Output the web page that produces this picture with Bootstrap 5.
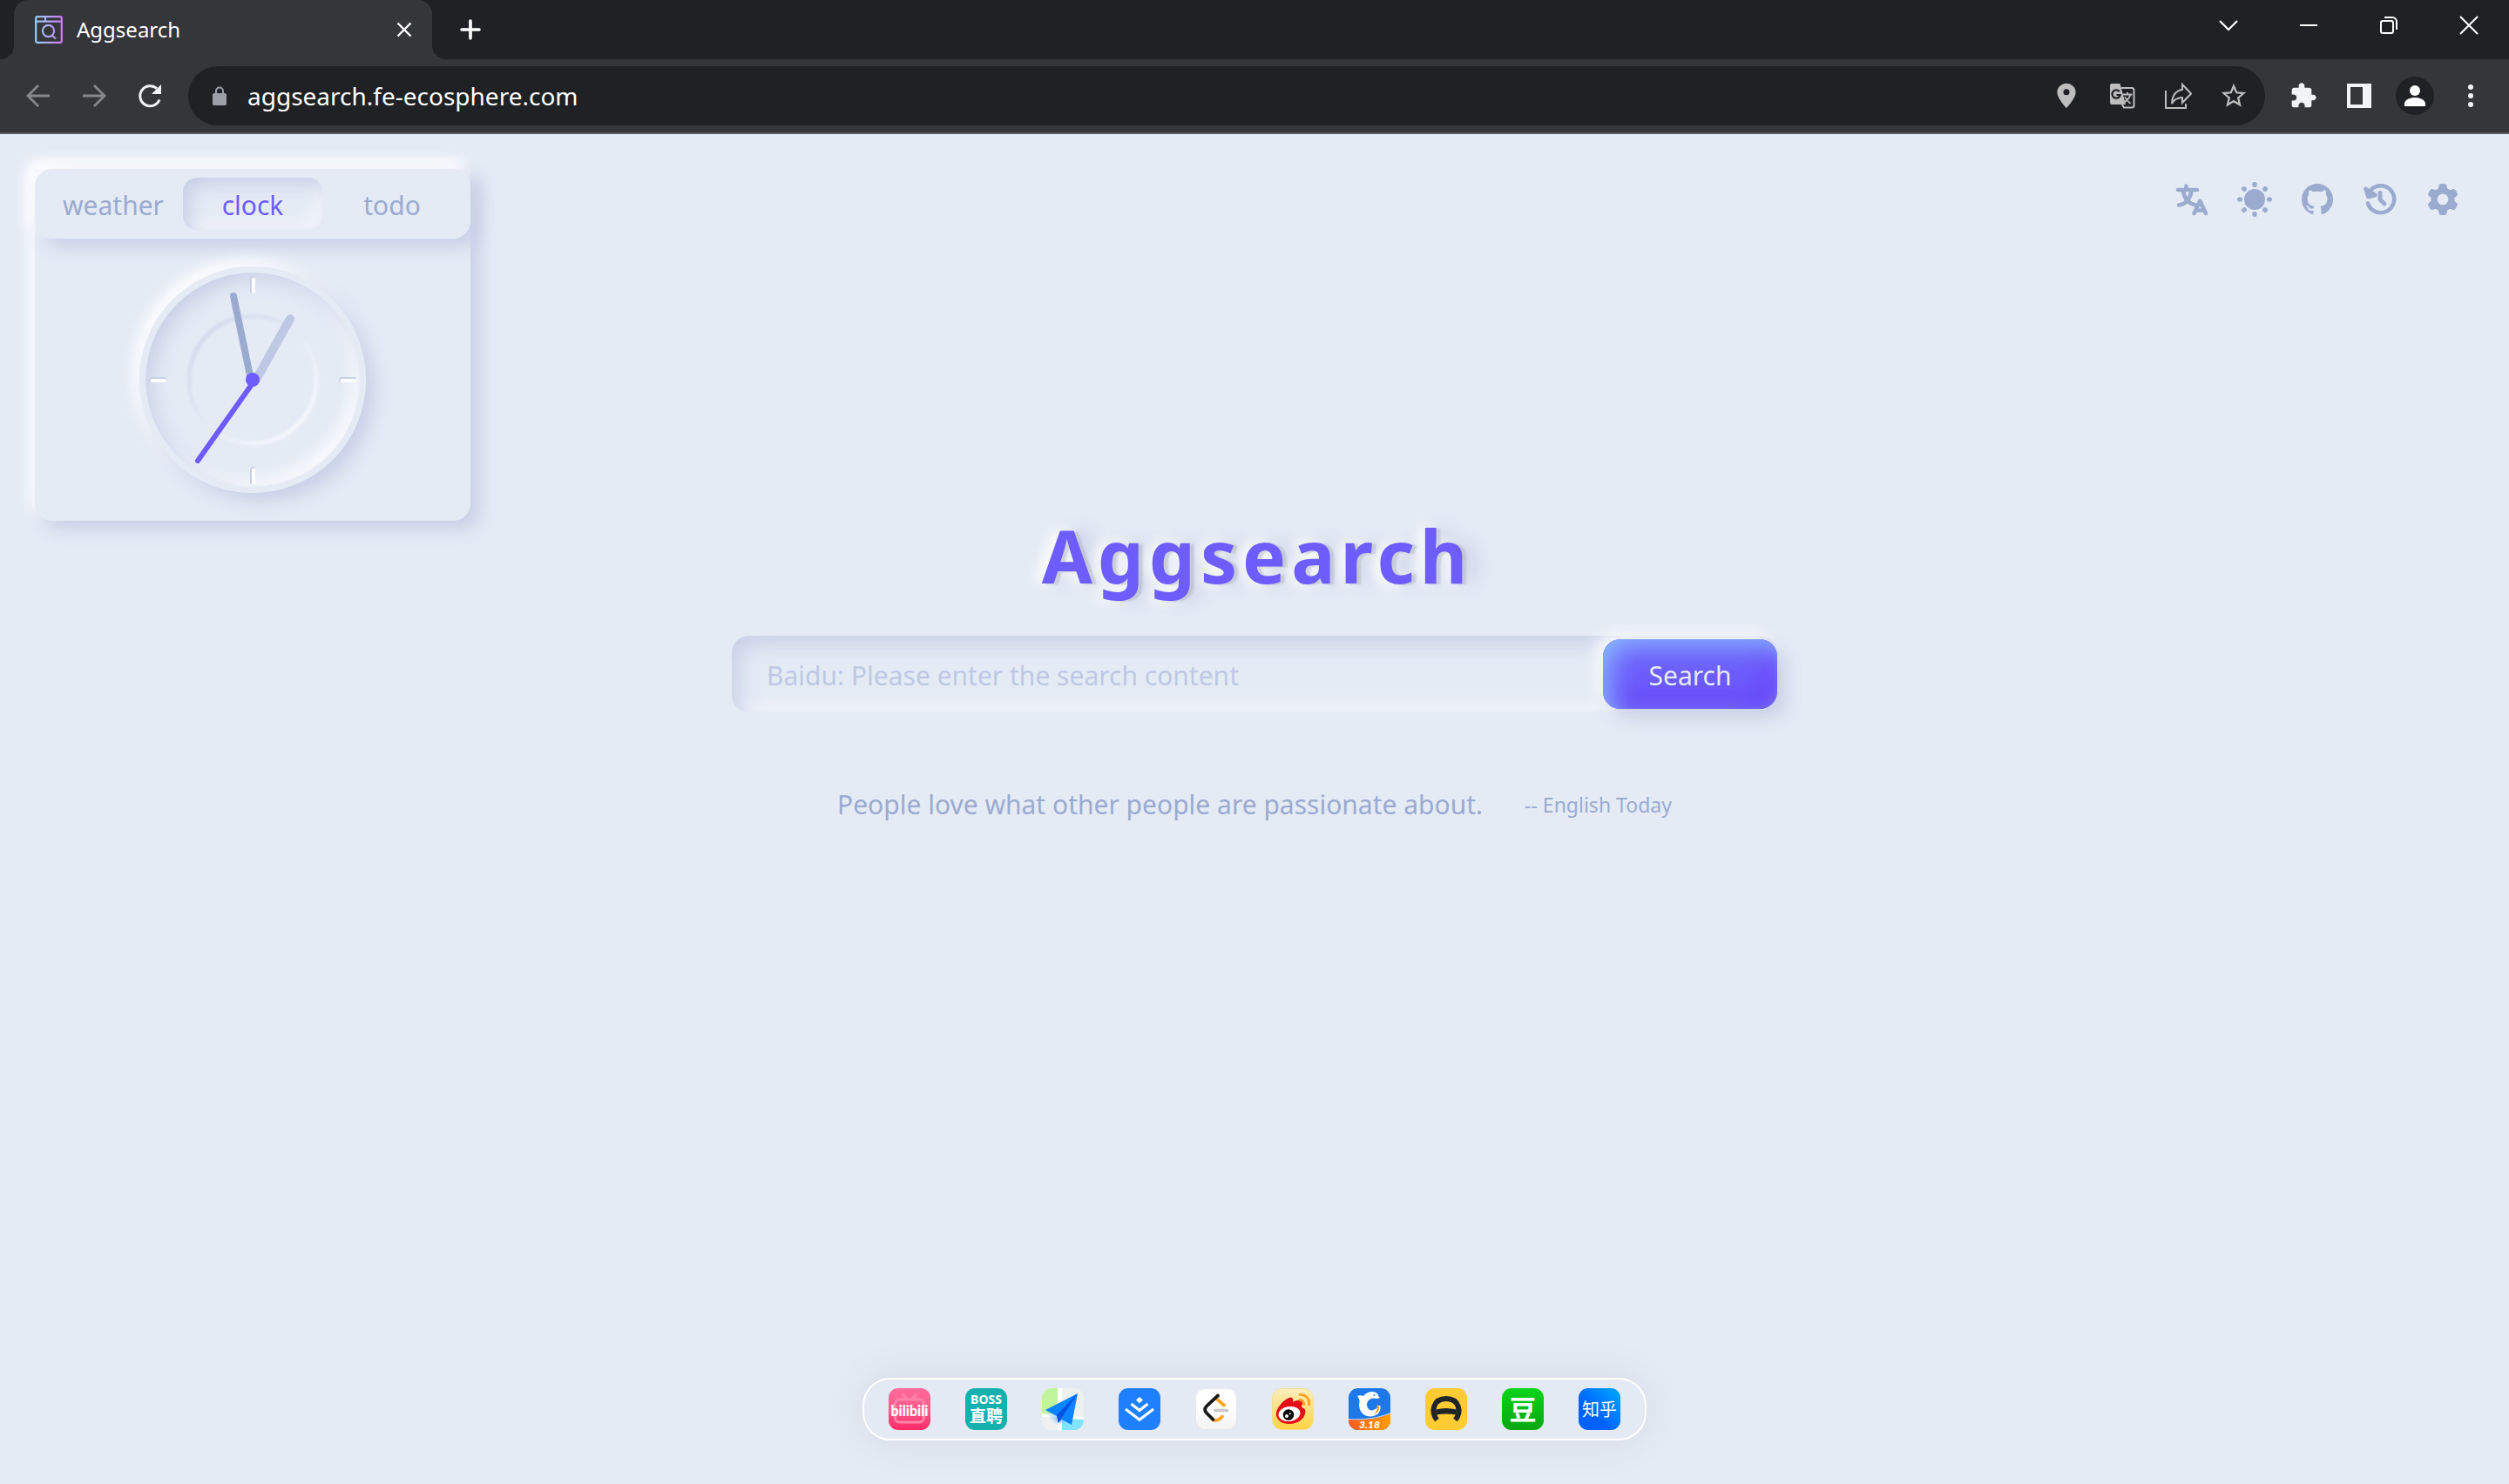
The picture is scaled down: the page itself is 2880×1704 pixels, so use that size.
<!DOCTYPE html>
<html lang="en">
<head>
<meta charset="utf-8">
<meta name="viewport" content="width=device-width, initial-scale=1">
<title>Aggsearch</title>
<link rel="stylesheet" href="https://cdn.jsdelivr.net/npm/bootstrap@5.3.0/dist/css/bootstrap.min.css">
<style>
  :root {
    --primary-light: #8abdff; --primary: #6d5dfc; --primary-dark: #5b0eeb;
    --base: #e4ebf5; --grey-2: #c8d0e7; --grey-3: #bec8e4; --grey-dark: #9baacf;
    --raised: 10px 10px 20px var(--grey-2), -7px -7px 18px #fff;
  }
  body { background: var(--base); color: var(--grey-dark); font-family: "Noto Sans", "Open Sans", "Noto Sans CJK SC", sans-serif; font-size: 30px; line-height: 48px; }
  button { font-family: inherit; }
  .plain { background: none; border: 0; padding: 0; color: inherit; display: flex; align-items: center; justify-content: center; }
  svg { display: block; flex: none; }

  .tabstrip { height: 68px; background: #202124; color: #fff; padding-left: 16px; }
  .page-tab { width: 480px; background: #35363a; border-radius: 16px 16px 0 0; padding: 0 20px 0 24px; gap: 16px; font-size: 24px; line-height: 32px; position: relative; }
  .page-tab::before, .page-tab::after { content: ""; position: absolute; bottom: 0; width: 16px; height: 16px; }
  .page-tab::before { right: 100%; background: radial-gradient(circle at 0 0, transparent 16px, #35363a 16px); }
  .page-tab::after { left: 100%; background: radial-gradient(circle at 100% 0, transparent 16px, #35363a 16px); }
  .new-tab { width: 88px; }
  .window-btn { width: 92px; height: 58px; }
  .toolbar { height: 86px; background: #35363a; border-bottom: 2px solid #5b5d61; padding: 0 12px; color: #f1f3f4; }
  .tool-btn { width: 64px; height: 64px; }
  .dim { color: #87888b; }
  .omnibox { height: 68px; border-radius: 34px; background: #202124; margin: 0 12px; padding: 0 4px 0 26px; color: #bdbdbd; }
  .url-field { background: none; border: 0; outline: 0; color: #fff; font-size: 28px; line-height: 40px; padding: 0; margin-left: 22px; min-width: 0; }
  .avatar { width: 44px; height: 44px; border-radius: 50%; background: #202124; }

  .widget { width: 500px; margin: 40px 0 0 40px; border-radius: 0 0 20px 20px; background: var(--base); box-shadow: var(--raised); }
  .widget-tabs { height: 80px; padding: 10px; border-radius: 20px; background: var(--base); box-shadow: var(--raised); }
  .widget-tabs .plain { flex: 1; padding-top: 4px; border-radius: 16px; }
  .widget-tabs .chosen { color: var(--primary); box-shadow: inset 8px 8px 20px var(--grey-2), inset -8px -8px 16px #f5f7fb; }
  .widget-body { height: 324px; overflow: hidden; border-radius: 0 0 20px 20px; }
  .dial { width: 260px; height: 260px; border-radius: 50%; border: 7px solid var(--base); box-shadow: var(--raised), inset 8px 8px 22px var(--grey-2), inset -7px -7px 18px #fff; }
  .actions { padding: 39px 40px 0 0; }
  .action-link { width: 72px; height: 72px; color: var(--grey-dark); display: flex; align-items: center; justify-content: center; }

  .brand-title { margin: 4px 0 56px; padding-left: 6px; font-size: 84px; line-height: 72px; font-weight: 700; letter-spacing: 6px; color: var(--primary); text-shadow: 5px 1px 2px rgba(160, 165, 180, .4), -8px 0 16px #fff, 16px 0 20px var(--grey-2); }
  .search-form { width: 1200px; max-width: 100%; height: 88px; border-radius: 20px; box-shadow: inset 8px 10px 24px var(--grey-2), inset -8px -8px 16px #f6f8fb; }
  .search-field { background: none; border: 0; outline: 0; padding: 4px 40px 0; color: var(--grey-dark); min-width: 0; }
  .search-field::placeholder { color: var(--grey-3); opacity: 1; }
  .search-btn { width: 200px; height: 80px; padding: 4px 0 0; border: 0; border-radius: 20px; background: var(--primary); color: var(--base); box-shadow: inset 8px 8px 30px var(--primary-light), inset -8px -8px 30px rgba(91, 14, 235, .6), 10px 10px 20px var(--grey-2), -7px -7px 18px #fafbfd; }
  .quote { margin-top: 82px; gap: 48px; }
  .quote-source { font-size: 23px; }

  .dock { margin-bottom: 50px; padding: 10px 28px; gap: 40px; border: 2px solid #fff; border-radius: 32px; background: #e4eaf4; box-shadow: 0 0 50px rgba(0, 0, 0, .08); }
</style>
</head>
<body class="d-flex flex-column min-vh-100">
<header>
  <div class="tabstrip d-flex">
    <div class="page-tab d-flex align-items-center">
      <svg width="32" height="32" viewBox="0 0 32 32" fill="none" stroke="url(#fav)" stroke-width="2.2"><defs><linearGradient id="fav" gradientUnits="userSpaceOnUse" x1="0" y1="0" x2="32" y2="0"><stop stop-color="#8fd0f5"/><stop offset="1" stop-color="#d07af5"/></linearGradient></defs><rect x="1.2" y="1.2" width="29.6" height="29.6" rx="2"/><path d="M1 6.6h30M12 1v5"/><circle cx="15.5" cy="17.5" r="6.6"/><path d="M19 22l5 4.5"/></svg>
      <span class="flex-grow-1">Aggsearch</span>
      <button class="plain" aria-label="Close tab"><svg width="24" height="24" viewBox="0 0 24 24" stroke="#fff" stroke-width="2.4"><path d="M4.500 4.500l15 15M19.500 4.500l-15 15"/></svg></button>
    </div>
    <button class="plain new-tab" aria-label="New tab"><svg width="24" height="24" viewBox="0 0 24 24" stroke="#fff" stroke-width="3.6" stroke-linecap="round"><path d="M12 2v20M2 12h20"/></svg></button>
    <div class="d-flex ms-auto">
      <button class="plain window-btn" aria-label="Search tabs"><svg width="24" height="24" viewBox="0 0 24 24" fill="none" stroke="#fff" stroke-width="2.200"><path d="M2 7l10 10 10-10"/></svg></button>
      <button class="plain window-btn" aria-label="Minimize"><svg width="24" height="24" viewBox="0 0 24 24" stroke="#fff" stroke-width="2"><path d="M2 12h20"/></svg></button>
      <button class="plain window-btn" aria-label="Restore"><svg width="24" height="24" viewBox="0 0 24 24" fill="none" stroke="#fff" stroke-width="2"><rect x="3" y="7" width="14" height="14" rx="2"/><path d="M7 3h9a5 5 0 0 1 5 5v9"/></svg></button>
      <button class="plain window-btn" aria-label="Close"><svg width="24" height="24" viewBox="0 0 24 24" stroke="#fff" stroke-width="2"><path d="M2 2l20 20M22 2L2 22"/></svg></button>
    </div>
  </div>
  <div class="toolbar d-flex align-items-center">
    <button class="plain tool-btn dim" aria-label="Back"><svg width="32" height="32" viewBox="0 0 32 32" fill="none" stroke="currentColor" stroke-width="2.800"><path d="M29 16H5M16 4L4 16l12 12"/></svg></button>
    <button class="plain tool-btn dim" aria-label="Forward"><svg width="32" height="32" viewBox="0 0 32 32" fill="none" stroke="currentColor" stroke-width="2.800"><path d="M3 16h24M16 4l12 12-12 12"/></svg></button>
    <button class="plain tool-btn" aria-label="Reload"><svg width="32" height="32" viewBox="0 0 32 32" fill="none" stroke="currentColor" stroke-width="3"><path d="M27 20.500A11.500 11.500 0 1 1 24 7.700"/><path d="M29 3v11H18z" fill="currentColor" stroke="none"/></svg></button>
    <div class="omnibox d-flex align-items-center flex-grow-1">
      <svg width="20" height="24" viewBox="0 0 20 24"><rect x="2" y="9" width="16" height="14" rx="2" fill="#9aa0a6"/><path d="M6 10V6.500a4 4 0 0 1 8 0V10" fill="none" stroke="#9aa0a6" stroke-width="2"/></svg>
      <input class="url-field flex-grow-1" type="text" aria-label="Address" value="aggsearch.fe-ecosphere.com">
      <button class="plain tool-btn" aria-label="Location"><svg width="34" height="34" viewBox="0 0 24 24" fill="currentColor"><path d="M12 2C8.130 2 4.500 5.130 4.500 9c0 5.250 7.500 13 7.500 13s7.500-7.750 7.500-13c0-3.870-3.630-7-7.500-7zm0 9.500a2.500 2.500 0 1 1 0-5 2.500 2.500 0 0 1 0 5z"/></svg></button>
      <button class="plain tool-btn" aria-label="Translate"><svg width="32" height="32" viewBox="0 0 32 32" fill="none" stroke="currentColor"><path d="M15 7h12a2.500 2.500 0 0 1 2.500 2.500v17.500a2.500 2.500 0 0 1-2.500 2.500H18l-3-5" stroke-width="2"/><path d="M16.500 14.500h11M22 12v2.500M25.500 14.500c-1 4-4 7-8 9.500M19 17c1.500 3.500 3.500 5.500 6.500 8" stroke-width="1.800"/><path d="M4 2h9.500l6.500 24H4a2 2 0 0 1-2-2V4a2 2 0 0 1 2-2z" fill="currentColor" stroke="none"/><path d="M13 11.200a4.700 4.700 0 1 0 .8 3.800H9.500" stroke="#202124" stroke-width="2.200"/></svg></button>
      <button class="plain tool-btn" aria-label="Share"><svg width="32" height="32" viewBox="0 0 32 32" fill="none" stroke="currentColor" stroke-width="2"><path d="M2 10v20h23v-5"/><path d="M21 3l10 10.500L21 24v-6c-5 0-9 1.500-12 7C9.500 16 13.500 10 21 9z"/></svg></button>
      <button class="plain tool-btn" aria-label="Bookmark"><svg width="34" height="34" viewBox="0 0 24 24" fill="currentColor"><path d="M22 9.240l-7.190-.62L12 2 9.190 8.630 2 9.240l5.460 4.730L5.820 21 12 17.270 18.180 21l-1.630-7.030L22 9.240zM12 15.400l-3.760 2.270 1-4.280-3.320-2.880 4.380-.38L12 6.100l1.710 4.040 4.380.38-3.320 2.880 1 4.280L12 15.400z"/></svg></button>
    </div>
    <button class="plain tool-btn" aria-label="Extensions"><svg width="32" height="32" viewBox="0 0 24 24" fill="currentColor"><path d="M20.500 11H19V7c0-1.100-.9-2-2-2h-4V3.500C13 2.120 11.880 1 10.500 1S8 2.120 8 3.500V5H4c-1.100 0-1.990.9-1.990 2v3.800H3.500c1.490 0 2.700 1.210 2.700 2.700s-1.210 2.700-2.700 2.700H2V20c0 1.100.9 2 2 2h3.800v-1.500c0-1.490 1.210-2.700 2.700-2.700 1.490 0 2.700 1.210 2.700 2.700V22H17c1.100 0 2-.9 2-2v-4h1.500c1.380 0 2.500-1.120 2.500-2.500S21.880 11 20.500 11z"/></svg></button>
    <button class="plain tool-btn" aria-label="Side panel"><svg width="32" height="32" viewBox="0 0 32 32" fill="currentColor"><path fill-rule="evenodd" d="M2 2h28v28H2zM6 6v20h14V6z"/></svg></button>
    <button class="plain tool-btn" aria-label="Profile"><span class="avatar d-flex align-items-center justify-content-center"><svg width="28" height="28" viewBox="0 0 28 28" fill="#fff"><circle cx="14" cy="8" r="6"/><path d="M2 26v-3c0-4.500 7-7 12-7s12 2.500 12 7v3z"/></svg></span></button>
    <button class="plain tool-btn" aria-label="Menu"><svg width="32" height="32" viewBox="0 0 32 32" fill="currentColor"><circle cx="16" cy="6" r="3"/><circle cx="16" cy="16" r="3"/><circle cx="16" cy="26" r="3"/></svg></button>
  </div>
</header>

<main class="d-flex flex-column flex-grow-1">
  <div class="d-flex justify-content-between align-items-start">
    <section class="widget">
      <div class="widget-tabs d-flex" role="tablist">
        <button class="plain" role="tab">weather</button>
        <button class="plain chosen" role="tab" aria-selected="true">clock</button>
        <button class="plain" role="tab">todo</button>
      </div>
      <div class="widget-body d-flex align-items-center justify-content-center">
        <div class="dial d-flex align-items-center justify-content-center">
          <svg width="246" height="246" viewBox="-123 -123 246 246">
            <defs>
              <filter id="soft" x="-20%" y="-20%" width="140%" height="140%"><feGaussianBlur stdDeviation="1.500"/></filter>
              <linearGradient id="ring" x1="0" y1="0" x2="1" y2="1"><stop offset=".1" stop-color="#d2d9eb"/><stop offset=".5" stop-color="#e4ebf5"/><stop offset=".9" stop-color="#f6f8fc"/></linearGradient>
              <g id="tick"><rect x="-3" y="-10" width="6" height="20" rx="3" fill="#c8d0e7"/><rect x="-1" y="-8.500" width="4" height="18.500" rx="2" fill="#fff"/></g>
              <g id="tick-flat"><rect x="-10" y="-3" width="20" height="6" rx="3" fill="#c8d0e7"/><rect x="-8.500" y="-1" width="18.500" height="4" rx="2" fill="#fff"/></g>
            </defs>
            <circle r="73" fill="none" stroke="url(#ring)" stroke-width="5" filter="url(#soft)"/>
            <use href="#tick" y="-109"/><use href="#tick" y="110"/>
            <use href="#tick-flat" x="-109"/><use href="#tick-flat" x="109"/>
            <g stroke-linecap="round">
              <path d="M4 0L43 -70" stroke="#bec8e4" stroke-width="10"/>
              <path d="M-2 0L-22 -96" stroke="#9baacf" stroke-width="8"/>
              <path d="M0 4L-63 93" stroke="#6d5dfc" stroke-width="6"/>
            </g>
            <circle r="8" fill="#6d5dfc"/>
          </svg>
        </div>
      </div>
    </section>
    <nav class="actions d-flex" aria-label="Tools">
      <a class="action-link" href="#" aria-label="Language"><svg width="40" height="40" viewBox="0 0 40 40" fill="none" stroke="currentColor" stroke-width="4.600" stroke-linecap="round" stroke-linejoin="round"><path d="M4 9h22M13.500 4.500V9M10 10c1 8 6 15 15 16.500M19.500 10c-1 8-6 15.500-14.500 16.500M22.500 36l6.800-14.200L36 36M25 32.500h8.500"/></svg></a>
      <a class="action-link" href="#" aria-label="Theme"><svg width="40" height="40" viewBox="-20 -20 40 40" fill="currentColor"><circle r="12"/><g id="ray"><ellipse cy="-17" rx="2.800" ry="3"/><ellipse cy="17" rx="2.800" ry="3"/><ellipse cx="-17" rx="3" ry="2.800"/><ellipse cx="17" rx="3" ry="2.800"/></g><use href="#ray" transform="rotate(45)"/></svg></a>
      <a class="action-link" href="#" aria-label="GitHub"><svg width="36" height="36" viewBox="0 0 16 16" fill="currentColor"><path d="M8 0C3.580 0 0 3.580 0 8c0 3.540 2.290 6.530 5.470 7.590.4.070.55-.17.55-.38 0-.19-.01-.82-.01-1.490-2.010.37-2.530-.49-2.690-.94-.09-.23-.48-.94-.82-1.130-.28-.15-.68-.52-.01-.53.63-.01 1.080.58 1.230.82.72 1.210 1.870.87 2.330.66.070-.52.28-.87.51-1.070-1.780-.2-3.640-.89-3.640-3.950 0-.87.31-1.590.82-2.150-.08-.2-.36-1.020.08-2.120 0 0 .67-.21 2.200.82.64-.18 1.320-.27 2-.27s1.360.09 2 .27c1.530-1.040 2.200-.82 2.200-.82.44 1.100.16 1.920.08 2.120.51.56.82 1.270.82 2.150 0 3.070-1.870 3.750-3.650 3.950.29.25.54.73.54 1.480 0 1.070-.01 1.930-.01 2.200 0 .21.15.46.55.38A8.010 8.010 0 0 0 16 8c0-4.420-3.580-8-8-8z"/></svg></a>
      <a class="action-link" href="#" aria-label="History"><svg width="40" height="40" viewBox="0 0 40 40" fill="none" stroke="currentColor" stroke-width="4.600" stroke-linecap="round" stroke-linejoin="round"><path d="M6 24.500A15.500 15.500 0 1 0 9.500 9"/><path d="M3.500 8l3 9 8-2z" fill="currentColor"/><path d="M20 12.500V20l5 5" stroke-width="4.800"/></svg></a>
      <a class="action-link" href="#" aria-label="Settings"><svg width="36" height="36" viewBox="0 0 512 512" fill="currentColor"><path fill-rule="evenodd" d="M495.9 166.6c3.2 8.7 .5 18.4-6.4 24.6l-43.3 39.4c1.1 8.3 1.7 16.8 1.7 25.4s-.6 17.1-1.7 25.4l43.3 39.4c6.9 6.2 9.6 15.9 6.4 24.6c-4.4 11.9-9.7 23.3-15.8 34.3l-4.7 8.1c-6.6 11-14 21.4-22.1 31.2c-5.9 7.2-15.7 9.6-24.5 6.8l-55.7-17.7c-13.4 10.3-28.2 18.9-44 25.4l-12.5 57.1c-2 9.1-9 16.3-18.2 17.8c-13.800 2.3-28 3.5-42.5 3.5s-28.7-1.2-42.500-3.5c-9.200-1.5-16.200-8.7-18.200-17.8l-12.500-57.100c-15.800-6.5-30.600-15.100-44-25.400L83.100 425.900c-8.800 2.800-18.600 .3-24.500-6.800c-8.100-9.800-15.500-20.200-22.100-31.200l-4.700-8.100c-6.100-11-11.400-22.400-15.800-34.300c-3.200-8.700-.5-18.400 6.400-24.600l43.300-39.400C64.600 273.100 64 264.600 64 256s.6-17.100 1.700-25.400L22.400 191.200c-6.900-6.200-9.600-15.900-6.400-24.600c4.400-11.900 9.700-23.300 15.800-34.300l4.700-8.100c6.600-11 14-21.400 22.100-31.200c5.900-7.200 15.700-9.600 24.500-6.800l55.700 17.700c13.400-10.300 28.200-18.900 44-25.400l12.500-57.100c2-9.100 9-16.300 18.200-17.800C227.300 1.200 241.500 0 256 0s28.700 1.200 42.500 3.500c9.200 1.500 16.200 8.700 18.200 17.800l12.500 57.100c15.800 6.500 30.600 15.100 44 25.400l55.700-17.700c8.800-2.800 18.600-.3 24.500 6.800c8.100 9.800 15.500 20.200 22.100 31.200l4.700 8.100c6.100 11 11.400 22.400 15.800 34.300zM256 347a91 91 0 1 0 0-182 91 91 0 1 0 0 182z"/></svg></a>
    </nav>
  </div>

  <section class="d-flex flex-column align-items-center">
    <h1 class="brand-title">Aggsearch</h1>
    <form class="search-form d-flex align-items-center">
      <input class="search-field flex-grow-1" type="text" aria-label="Search content" placeholder="Baidu: Please enter the search content">
      <button class="search-btn" type="button">Search</button>
    </form>
    <div class="quote d-flex align-items-center">
      <span>People love what other people are passionate about.</span>
      <span class="quote-source">-- English Today</span>
    </div>
  </section>

  <nav class="dock d-flex mt-auto align-self-center" aria-label="Sites">
    <a href="#" aria-label="Bilibili"><svg width="48" height="48" viewBox="0 0 48 48"><defs><linearGradient id="g1" x1="0" y1="0" x2="0" y2="1"><stop stop-color="#ff6a9b"/><stop offset=".5" stop-color="#fc5a8b"/><stop offset="1" stop-color="#ff2a68"/></linearGradient></defs><rect width="48" height="48" rx="11" fill="url(#g1)"/><g fill="none" stroke="#ff82a8" stroke-width="3" stroke-linecap="round"><rect x="7.500" y="13" width="33" height="26" rx="5"/><path d="M16.500 7.500l4 4.500M31.500 7.500l-4 4.500"/></g><text x="24" y="32" text-anchor="middle" font-family="Lato" font-size="16" font-weight="900" fill="#fff">bilibili</text></svg></a>
    <a href="#" aria-label="BOSS"><svg width="48" height="48" viewBox="0 0 48 48" fill="#fff" text-anchor="middle" font-weight="700"><rect width="48" height="48" rx="11" fill="#16b1ae"/><text x="24" y="18" font-family="Noto Sans" font-size="14">BOSS</text><text x="24" y="39" font-family="Noto Sans CJK SC" font-size="19">直聘</text></svg></a>
    <a href="#" aria-label="Maps"><svg width="48" height="48" viewBox="0 0 48 48"><defs><clipPath id="c3"><rect width="48" height="48" rx="11"/></clipPath><filter id="shade"><feGaussianBlur stdDeviation="2"/></filter></defs><g clip-path="url(#c3)"><path fill="#eef1f0" d="M0 0h48v48H0z"/><path fill="#c0f59b" d="M0 0h18v30H0z"/><path fill="#82e3ff" d="M23 34h25v14H23z"/><path fill="#fff" d="M18 0h5v48h-5zM0 29l48 4v3L0 33z"/><path d="M6 28l12 12 12-4z" fill="#62a8f0" opacity=".6" filter="url(#shade)"/><path fill="#0b84ff" d="M41 6L4 25l13 7 2 8 4-4 11 6z"/><path fill="#0451e2" d="M41 6L17 31l2 9 3-5z"/></g></svg></a>
    <a href="#" aria-label="Juejin"><svg width="48" height="48" viewBox="0 0 48 48"><rect width="48" height="48" rx="11" fill="#1e80ff"/><path d="M24 10l4 3.500-4 3.700-4-3.700z" fill="#fff"/><path d="M14.500 18l9.500 7.500 9.500-7.500M8 24l16 12.300L40 24" fill="none" stroke="#fff" stroke-width="3"/></svg></a>
    <a href="#" aria-label="LeetCode"><svg width="48" height="48" viewBox="0 0 48 48" fill="none" stroke-linecap="round" stroke-width="3.800"><defs><linearGradient id="g5" x1="0" y1="0" x2="0" y2="1"><stop offset=".4" stop-color="#fff"/><stop offset="1" stop-color="#f3f3f3"/></linearGradient></defs><rect x=".5" y=".5" width="47" height="47" rx="11" fill="url(#g5)" stroke="#e6e7ea" stroke-width="1"/><path d="M26 13.500l7 6M20 36c4 2 7 1 11-3.500" stroke="#ffa51f"/><path d="M22.500 25.500h14" stroke="#c9c9c9" stroke-width="3.500"/><path d="M26 8.500L13.500 20c-3 3-3 6-.5 8.500l7.500 7.500" stroke="#1a1817"/></svg></a>
    <a href="#" aria-label="Weibo"><svg width="48" height="48" viewBox="0 0 48 48"><defs><linearGradient id="g6" x1="0" y1="0" x2="0" y2="1"><stop stop-color="#fceebd"/><stop offset="1" stop-color="#fed443"/></linearGradient></defs><rect x=".5" y=".5" width="47" height="47" rx="11" fill="url(#g6)" stroke="#f3dd95"/><path d="M5 31C4 24 13 13 20 11c4-1 5 2 4 5 5-3 11-3 11 1l-1 5c4 1 5 3 4 7-1 7-9 12-18 12S6 37 5 31z" fill="#e60d18"/><ellipse cx="20" cy="29.500" rx="12.500" ry="8.500" fill="#fff" transform="rotate(-8 20 29.500)"/><circle cx="19" cy="30.500" r="6.300" fill="#080808"/><circle cx="17" cy="32" r="2" fill="#fff"/><circle cx="20.800" cy="29.300" r="1" fill="#fff"/><path d="M31 7.500c8-1 13 5 11.500 12.500M31 13.500c4-.5 6.500 2.500 5.500 6" fill="none" stroke="#f9a127" stroke-width="2.800"/></svg></a>
    <a href="#" aria-label="Ctrip"><svg width="48" height="48" viewBox="0 0 48 48"><defs><clipPath id="c7"><rect width="48" height="48" rx="11"/></clipPath><linearGradient id="g7"><stop stop-color="#ff5b20"/><stop offset="1" stop-color="#ff9f00"/></linearGradient></defs><g clip-path="url(#c7)"><path fill="#1e78e8" d="M0 0h48v48H0z"/><path d="M0 36c18 1 34-1 48-7v19H0z" fill="url(#g7)"/><path d="M0 35.500c18 1 34-1 48-7" fill="none" stroke="#cfdcf2"/></g><path d="M10 9c2-1 5-1 7 0 2-3 6-5 10-5 5 0 7 3 7.500 5.500l1.500 1-2 1.500-6-.5c-6 1-8 6-6.500 10 1.500 4 5 5 8 3 3-1 5-3 5-5l2 1c1 7-4 12-12 12-9 0-14-9-12-17 0-2-1-5-2.500-6.500z" fill="#fff"/><path d="M32 19c2 5 0 9-4 11 6-1 8-6 6-10z" fill="#ff9310"/><circle cx="29.500" cy="8" r="1" fill="#1e78e8"/><text x="24" y="46" text-anchor="middle" fill="#fff" font-family="Lato" font-size="12" font-weight="900" font-style="italic">3.18</text></svg></a>
    <a href="#" aria-label="Autohome"><svg width="48" height="48" viewBox="0 0 48 48"><rect width="48" height="48" rx="11" fill="#fecb32"/><path d="M13.500 36.500C6 27 9 12 24 12s18 15 10.500 24.500" fill="none" stroke="#20252a" stroke-width="6"/><path d="M12 24.500c8-2 16-2 24 0l-1 6c-7-1.500-15-1.500-22 0z" fill="#20252a"/></svg></a>
    <a href="#" aria-label="Douban"><svg width="48" height="48" viewBox="0 0 48 48"><defs><linearGradient id="g9" x1="0" y1="0" x2="0" y2="1"><stop stop-color="#0bd51b"/><stop offset="1" stop-color="#08a612"/></linearGradient></defs><rect width="48" height="48" rx="11" fill="url(#g9)"/><text x="24" y="35.500" text-anchor="middle" fill="#fff" font-family="Noto Sans CJK SC" font-size="31" font-weight="700">豆</text></svg></a>
    <a href="#" aria-label="Zhihu"><svg width="48" height="48" viewBox="0 0 48 48"><defs><linearGradient id="g10" x1="1" y1="0" x2=".2" y2=".8"><stop stop-color="#00a8ff"/><stop offset=".8" stop-color="#0062fe"/></linearGradient></defs><rect width="48" height="48" rx="11" fill="url(#g10)"/><text x="24" y="31.500" text-anchor="middle" fill="#fff" font-family="Noto Sans CJK SC" font-size="20" font-weight="400">知乎</text></svg></a>
  </nav>
</main>
<script src="https://cdn.jsdelivr.net/npm/bootstrap@5.3.0/dist/js/bootstrap.bundle.min.js"></script>
</body>
</html>
